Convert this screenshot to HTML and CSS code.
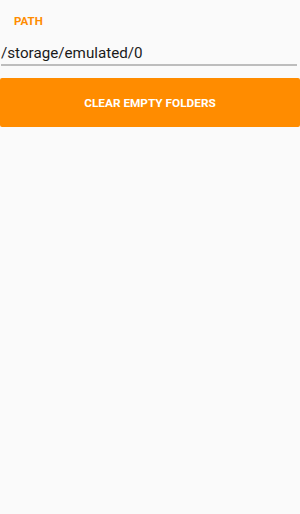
FILE: index.html
```html
<!DOCTYPE html>
<html lang="en">
<head>
    <meta charset="UTF-8">
    <meta name="viewport" content="width=device-width, initial-scale=1.0">
    <title>Clear Empty Folders</title>
    <link rel="stylesheet" href="styles.css">
</head>
<body>

    <div class="path-label">PATH</div>
    <div class="path-field">/storage/emulated/0</div>

    <button class="clear-btn">CLEAR EMPTY FOLDERS</button>

</body>
</html>
```

FILE: styles.css
```css
body { margin: 0; background: #fafafa; font-family: Roboto, "Noto Sans", sans-serif; height: 514px; }
.path-label { color: #ff8c00; font-size: 11.5px; font-weight: bold; padding: 15px 0 0 14px; line-height: 13px; }
.path-field {
    margin: 16px 3px 0 1px;
    font-size: 15.2px;
    line-height: 18px;
    color: #1a1a1a;
    padding-bottom: 2px;
    border-bottom: 2px solid #bdbdbd;
}
.clear-btn {
    display: block;
    width: 300px;
    height: 49px;
    margin-top: 12px;
    border: none;
    border-radius: 2px;
    background: #ff8c00;
    color: #fff;
    font-family: Roboto, sans-serif;
    font-size: 11.8px;
    font-weight: bold;
    padding: 0;
}
```
